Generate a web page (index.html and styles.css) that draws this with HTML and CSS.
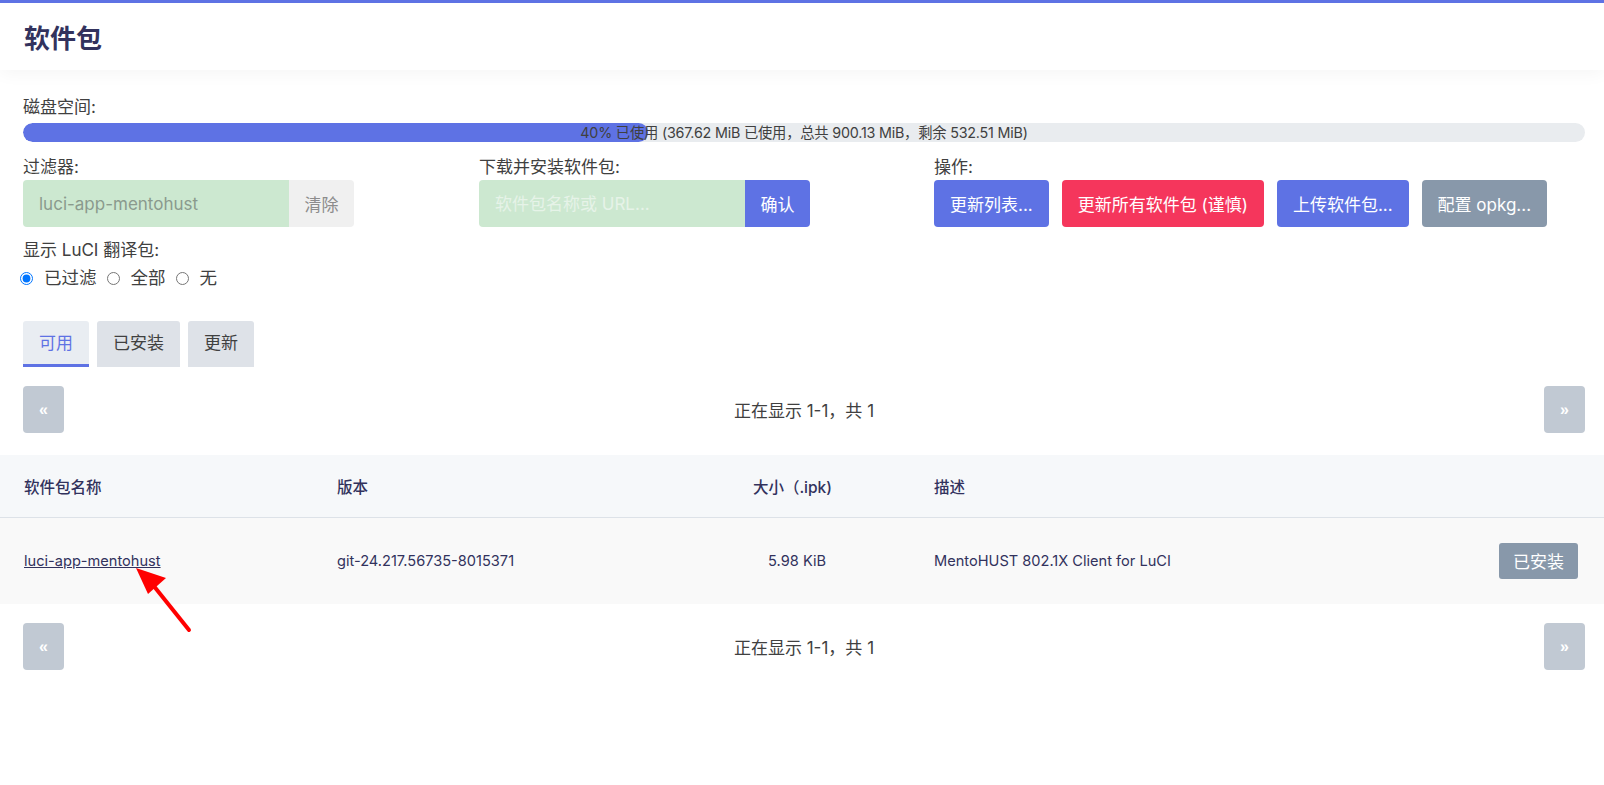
FILE: index.html
```html
<!DOCTYPE html>
<html lang="zh-CN">
<head>
  <meta charset="UTF-8" />
  <title>软件包</title>
  <link rel="stylesheet" href="styles.css">
</head>
<body>

  <!-- Page title bar -->
  <header class="titlebar">
    <h2>软件包</h2>
  </header>

  <div class="content">
    <div class="label">磁盘空间:</div>
    <div class="diskbar">
      <div class="diskbar-fill" style="width: 40%"></div>
      <span class="diskbar-text">40% 已使用 (367.62 MiB 已使用，总共 900.13 MiB，剩余 532.51 MiB)</span>
    </div>

    <div class="controls">
      <div class="control">
        <div class="label">过滤器:</div>
        <div class="input-group">
          <input class="field filter" value="luci-app-mentohust" />
          <button class="btn btn-clear">清除</button>
        </div>
      </div>
      <div class="control">
        <div class="label">下载并安装软件包:</div>
        <div class="input-group">
          <input class="field" placeholder="软件包名称或 URL..." />
          <button class="btn btn-primary">确认</button>
        </div>
      </div>
      <div class="control">
        <div class="label">操作:</div>
        <div class="actions">
          <button class="btn btn-primary">更新列表...</button>
          <button class="btn btn-danger">更新所有软件包 (谨慎)</button>
          <button class="btn btn-primary">上传软件包...</button>
          <button class="btn btn-muted">配置 opkg...</button>
        </div>
      </div>
    </div>

    <div class="label i18n-label">显示 LuCI 翻译包:</div>
    <div class="radios">
      <label><input type="radio" name="i18n" checked>已过滤</label>
      <label><input type="radio" name="i18n">全部</label>
      <label><input type="radio" name="i18n">无</label>
    </div>

    <ul class="tabs">
      <li class="active">可用</li>
      <li>已安装</li>
      <li>更新</li>
    </ul>

    <div class="pager">
      <button class="pg">&laquo;</button>
      <span>正在显示 1-1，共 1</span>
      <button class="pg">&raquo;</button>
    </div>
  </div>

  <table class="pkgs">
    <thead>
      <tr>
        <th class="c-name">软件包名称</th>
        <th class="c-ver">版本</th>
        <th class="c-size">大小（.ipk)</th>
        <th class="c-desc">描述</th>
        <th></th>
      </tr>
    </thead>
    <tbody>
      <tr>
        <td class="c-name"><a href="#">luci-app-mentohust</a></td>
        <td class="c-ver">git-24.217.56735-8015371</td>
        <td class="c-size">5.98 KiB</td>
        <td class="c-desc">MentoHUST 802.1X Client for LuCI</td>
        <td class="c-act"><button class="btn btn-muted btn-sm">已安装</button></td>
      </tr>
    </tbody>
  </table>

  <div class="content">
    <div class="pager">
      <button class="pg">&laquo;</button>
      <span>正在显示 1-1，共 1</span>
      <button class="pg">&raquo;</button>
    </div>
  </div>

  <!-- annotation arrow -->
  <svg class="arrow" width="70" height="80" viewBox="0 0 70 80">
    <line x1="17" y1="17" x2="53" y2="62" stroke="#f00" stroke-width="4" stroke-linecap="round"/>
    <polygon points="0,0 30,10 12,26" fill="#f00"/>
  </svg>

</body>
</html>
```

FILE: styles.css
```css
body {
  margin: 0;
  border-top: 3px solid #5e72e4;
  font-family: "Inter", "Noto Sans CJK SC", sans-serif;
  color: #404040;
  background: #fff;
  position: relative;
  min-height: 782px;
}

/* ==== Title bar ==== */
.titlebar {
  height: 67px;
  display: flex;
  align-items: center;
  padding: 0 24px;
  box-shadow: 0 4px 16px rgba(0,0,0,0.04);
}
.titlebar h2 {
  margin: 0;
  font-size: 26px;
  font-weight: 700;
  color: #32325d;
}

.content {
  padding: 0 19px 0 23px;
}
.label {
  font-size: 17px;
  line-height: 20px;
  color: #404040;
}
.content > .label:first-child {
  margin-top: 27px;
}

/* ==== Disk usage ==== */
.diskbar {
  position: relative;
  height: 19px;
  margin-top: 6px;
  background: #e9ecef;
  border-radius: 10px;
  overflow: hidden;
}
.diskbar-fill {
  height: 100%;
  background: #5e72e4;
  border-radius: 10px;
}
.diskbar-text {
  position: absolute;
  inset: 0;
  text-align: center;
  font-size: 14.3px;
  line-height: 19px;
  color: #404040;
  letter-spacing: -0.2px;
}

/* ==== Controls ==== */
.controls {
  display: grid;
  grid-template-columns: 456px 455px 1fr;
  margin-top: 15px;
}
.control .label {
  margin-bottom: 3px;
}
.input-group {
  display: flex;
  height: 47px;
}
.field {
  width: 266px;
  box-sizing: border-box;
  border: none;
  border-radius: 4px 0 0 4px;
  background: #cce8d0;
  padding: 0 16px;
  font-family: inherit;
  font-size: 17px;
  color: #8a9a8d;
  outline: none;
}
.field::placeholder {
  color: #e6f3e8;
}
.btn {
  border: none;
  border-radius: 4px;
  font-family: inherit;
  font-size: 17px;
  color: #fff;
  padding: 0 16px;
  cursor: pointer;
}
.input-group .btn {
  border-radius: 0 4px 4px 0;
  width: 65px;
  padding: 0;
}
.btn-clear {
  background: #f0f0f0;
  color: #8c8c8c;
}
.btn-primary {
  background: #5e72e4;
}
.btn-danger {
  background: #f5365c;
}
.btn-muted {
  background: #8898aa;
}
.actions {
  display: flex;
  gap: 13px;
  height: 47px;
}

.i18n-label {
  margin-top: 13px;
}
.radios {
  display: flex;
  gap: 10px;
  margin-left: -3px;
  margin-top: 7px;
  font-size: 17.5px;
  line-height: 22px;
}
.radios label {
  display: flex;
  align-items: center;
  gap: 11px;
}
.radios input {
  margin: 0;
  width: 13px;
  height: 13px;
}

/* ==== Tabs ==== */
.tabs {
  display: flex;
  gap: 8px;
  list-style: none;
  margin: 32px 0 0;
  padding: 0;
}
.tabs li {
  height: 46px;
  box-sizing: border-box;
  padding: 0 16px;
  line-height: 44px;
  font-size: 17px;
  background: #dee2e8;
  color: #404040;
  border-radius: 3px 3px 0 0;
}
.tabs li.active {
  background: #e9edf2;
  color: #5e72e4;
  border-bottom: 3px solid #5e72e4;
}

/* ==== Pager ==== */
.pager {
  display: flex;
  align-items: center;
  justify-content: space-between;
  margin-top: 19px;
  font-size: 17px;
  color: #404040;
}
.pg {
  width: 41px;
  height: 47px;
  border: none;
  border-radius: 4px;
  background: #c1c9d3;
  color: #fff;
  font-size: 16px;
  font-weight: 700;
}

/* ==== Table ==== */
.pkgs {
  width: 100%;
  border-collapse: collapse;
  margin-top: 22px;
  font-size: 14.6px;
}
.pkgs thead tr {
  background: #f6f8fa;
  height: 62px;
}
.pkgs th {
  font-weight: 500;
  font-size: 15.5px;
  color: #32325d;
  text-align: left;
  border-bottom: 1px solid #dde2e8;
}
.pkgs tbody tr {
  background: #f9f9f9;
  height: 87px;
}
.pkgs td {
  color: #32325d;
}
.pkgs .c-name {
  padding-left: 24px;
  width: 311px;
}
.pkgs .c-ver {
  width: 267px;
}
.pkgs .c-size {
  text-align: right;
  width: 220px;
  padding-right: 0;
}
.pkgs td.c-size {
  padding-right: 6px;
}
.pkgs .c-desc {
  padding-left: 102px;
}
.pkgs a {
  color: #32325d;
}
.pkgs .c-act {
  text-align: right;
  padding-right: 26px;
}
.btn-sm {
  height: 36px;
  padding: 0 14px;
  border-radius: 3px;
}

/* ==== Annotation ==== */
.arrow {
  position: absolute;
  left: 136px;
  top: 565px;
}
```
